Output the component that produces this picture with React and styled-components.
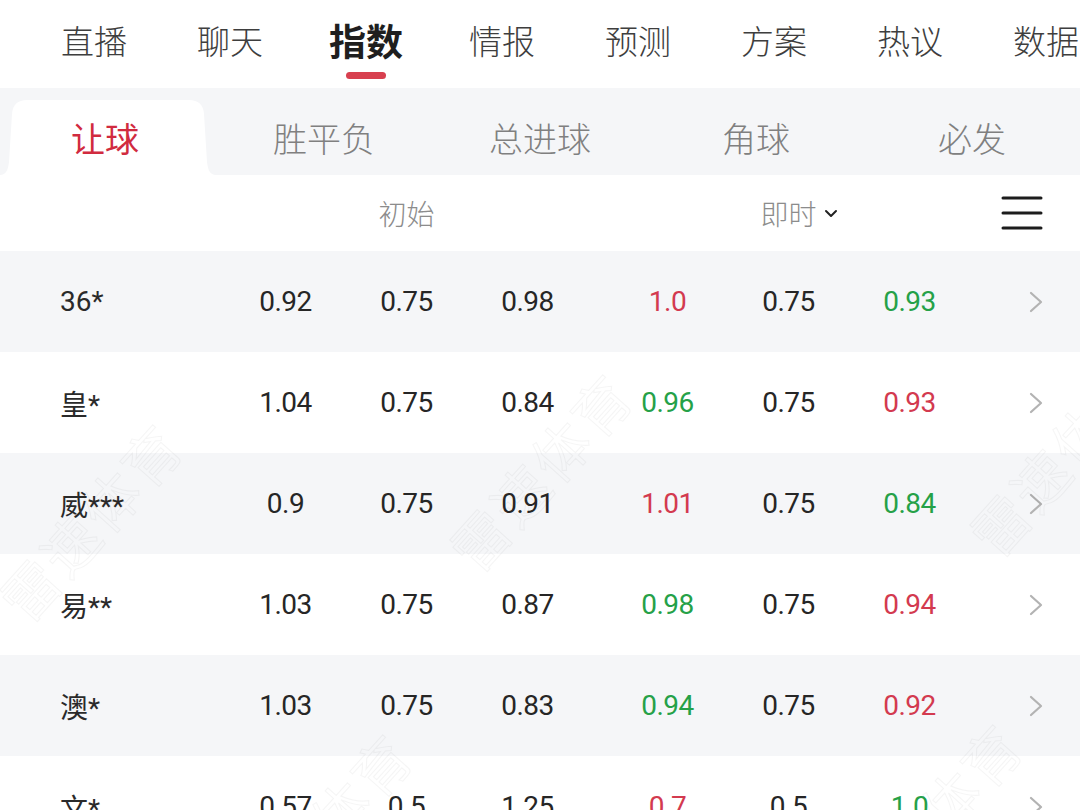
import React from 'react';
import styled, { createGlobalStyle } from 'styled-components';

const GlobalStyle = createGlobalStyle`
  html, body {
    margin: 0;
    padding: 0;
    background: #ffffff;
  }
  body {
    font-family: Roboto, "Noto Sans CJK SC", sans-serif;
    overflow: hidden;
  }
  * {
    box-sizing: border-box;
  }
`;

const Page = styled.div`
  position: relative;
  width: 1080px;
  height: 810px;
  overflow: hidden;
  background: #ffffff;
`;

// Top navigation
const TopNav = styled.nav`
  display: flex;
  height: 88px;
  padding-left: 26px;
  background: #ffffff;
  overflow: hidden;
`;

const NavItem = styled.div`
  flex: 0 0 136px;
  display: flex;
  flex-direction: column;
  align-items: center;
  padding-top: ${(p) => (p.$active ? '18px' : '20px')};
  font-family: "Noto Sans CJK SC", sans-serif;
  font-size: ${(p) => (p.$active ? '37px' : '33px')};
  font-weight: ${(p) => (p.$active ? 700 : 300)};
  line-height: ${(p) => (p.$active ? '44px' : '40px')};
  color: ${(p) => (p.$active ? '#1f1f1f' : '#3e3e3e')};
  white-space: nowrap;
`;

const NavIndicator = styled.span`
  display: block;
  width: 40px;
  height: 7px;
  margin-top: 10px;
  border-radius: 4px;
  background: ${(p) => (p.$show ? '#d8404f' : 'transparent')};
`;

// Secondary tabs
const SubTabs = styled.div`
  display: grid;
  grid-template-columns: repeat(5, 1fr);
  height: 87px;
  padding-top: 12px;
  background: #f5f6f8;
`;

const SubTab = styled.div`
  position: relative;
  display: flex;
  align-items: center;
  justify-content: center;
  height: 75px;
  font-family: "Noto Sans CJK SC", sans-serif;
  font-size: 34px;
  font-weight: ${(p) => (p.$active ? 400 : 300)};
  color: ${(p) => (p.$active ? '#d12b3f' : '#808080')};
`;

const TabShape = styled.svg`
  position: absolute;
  inset: 0;
  width: 100%;
  height: 100%;
`;

const TabLabel = styled.span`
  position: relative;
  margin-left: ${(p) => (p.$first ? '-6px' : '0')};
`;

// Table
const HeaderRow = styled.div`
  display: grid;
  grid-template-columns: 225px 363px 19px 363px 1fr;
  align-items: center;
  height: 76px;
  background: #ffffff;
`;

const GroupLabel = styled.div`
  grid-column: ${(p) => p.$col};
  display: flex;
  justify-content: center;
  font-family: "Noto Sans CJK SC", sans-serif;
  font-size: 28px;
  font-weight: 300;
  color: #8c8c8c;
`;

const LabelWrap = styled.span`
  position: relative;
`;

const Caret = styled.svg`
  position: absolute;
  left: calc(100% + 6px);
  top: 50%;
  width: 16px;
  height: 10px;
  margin-top: -4px;
`;

const MenuButton = styled.div`
  grid-column: 5;
  display: flex;
  justify-content: flex-end;
  padding-right: 37px;
`;

const Row = styled.div`
  display: grid;
  grid-template-columns: 225px repeat(3, 121px) 19px repeat(3, 121px) 1fr;
  align-items: center;
  height: 101px;
  background: ${(p) => (p.$shaded ? '#f5f6f8' : '#ffffff')};
`;

const Name = styled.div`
  padding-left: 60px;
  font-family: Roboto, "Noto Sans CJK SC", sans-serif;
  font-size: 28px;
  color: #2a2a2a;
`;

const Cell = styled.div`
  text-align: center;
  font-family: Roboto, sans-serif;
  font-size: 28px;
  letter-spacing: -0.5px;
  color: ${(p) => (p.$tone === 'up' ? '#d33a4f' : p.$tone === 'down' ? '#25a148' : '#262626')};
`;

const Spacer = styled.div``;

const Arrow = styled.div`
  display: flex;
  justify-content: flex-end;
  padding-right: 37px;
`;

const Watermark = styled.span`
  position: absolute;
  left: ${(p) => p.$x}px;
  top: ${(p) => p.$y}px;
  transform: translate(-50%, -50%) rotate(-48deg);
  font-family: "Noto Sans CJK SC", sans-serif;
  font-size: 56px;
  letter-spacing: 4px;
  color: transparent;
  -webkit-text-stroke: 1.2px rgba(0, 0, 0, 0.04);
  white-space: nowrap;
  pointer-events: none;
`;

const navItems = ['直播', '聊天', '指数', '情报', '预测', '方案', '热议', '数据'];
const subTabs = ['让球', '胜平负', '总进球', '角球', '必发'];

const rows = [
  { name: '36*', init: ['0.92', '0.75', '0.98'], live: [['1.0', 'up'], ['0.75'], ['0.93', 'down']] },
  { name: '皇*', init: ['1.04', '0.75', '0.84'], live: [['0.96', 'down'], ['0.75'], ['0.93', 'up']] },
  { name: '威***', init: ['0.9', '0.75', '0.91'], live: [['1.01', 'up'], ['0.75'], ['0.84', 'down']] },
  { name: '易**', init: ['1.03', '0.75', '0.87'], live: [['0.98', 'down'], ['0.75'], ['0.94', 'up']] },
  { name: '澳*', init: ['1.03', '0.75', '0.83'], live: [['0.94', 'down'], ['0.75'], ['0.92', 'up']] },
  { name: '文*', init: ['0.57', '0.5', '1.25'], live: [['0.7', 'up'], ['0.5'], ['1.0', 'down']] },
];

const ChevronRight = () => (
  <svg width="14" height="22" viewBox="0 0 14 22">
    <path d="M2 2 L12 11 L2 20" fill="none" stroke="#b3b3b3" strokeWidth="2.2" strokeLinecap="round" strokeLinejoin="round" />
  </svg>
);

const App = () => (
  <Page>
    <GlobalStyle />
    <TopNav>
      {navItems.map((item) => (
        <NavItem key={item} $active={item === '指数'}>
          {item}
          <NavIndicator $show={item === '指数'} />
        </NavItem>
      ))}
    </TopNav>

    <SubTabs>
      {subTabs.map((tab, i) => (
        <SubTab key={tab} $active={i === 0}>
          {i === 0 && (
            <TabShape viewBox="0 0 216 75" preserveAspectRatio="none">
              <path
                d="M0 75 C6 75 8 70 9 62 L12 14 Q13 0 27 0 L189 0 Q203 0 204 14 L207 62 C208 70 210 75 216 75 Z"
                fill="#ffffff"
              />
            </TabShape>
          )}
          <TabLabel $first={i === 0}>{tab}</TabLabel>
        </SubTab>
      ))}
    </SubTabs>

    <HeaderRow>
      <GroupLabel $col={2}>初始</GroupLabel>
      <GroupLabel $col={4}>
        <LabelWrap>
          即时
          <Caret viewBox="0 0 16 10">
            <path d="M3 2 L8 7 L13 2" fill="none" stroke="#222" strokeWidth="2" strokeLinecap="round" strokeLinejoin="round" />
          </Caret>
        </LabelWrap>
      </GroupLabel>
      <MenuButton>
        <svg width="42" height="36" viewBox="0 0 42 36">
          <g stroke="#1c1c1c" strokeWidth="3" strokeLinecap="round">
            <line x1="2" y1="3" x2="40" y2="3" />
            <line x1="2" y1="18" x2="40" y2="18" />
            <line x1="2" y1="33" x2="40" y2="33" />
          </g>
        </svg>
      </MenuButton>
    </HeaderRow>

    {rows.map((row, i) => (
      <Row key={row.name} $shaded={i % 2 === 0}>
        <Name>{row.name}</Name>
        {row.init.map((v, j) => (
          <Cell key={`i${j}`}>{v}</Cell>
        ))}
        <Spacer />
        {row.live.map(([v, tone], j) => (
          <Cell key={`l${j}`} $tone={tone}>{v}</Cell>
        ))}
        <Arrow>
          <ChevronRight />
        </Arrow>
      </Row>
    ))}

    <Watermark $x={90} $y={520}>雷速体育</Watermark>
    <Watermark $x={540} $y={470}>雷速体育</Watermark>
    <Watermark $x={1060} $y={455}>雷速体育</Watermark>
    <Watermark $x={320} $y={830}>雷速体育</Watermark>
    <Watermark $x={930} $y={820}>雷速体育</Watermark>
  </Page>
);

export default App;
